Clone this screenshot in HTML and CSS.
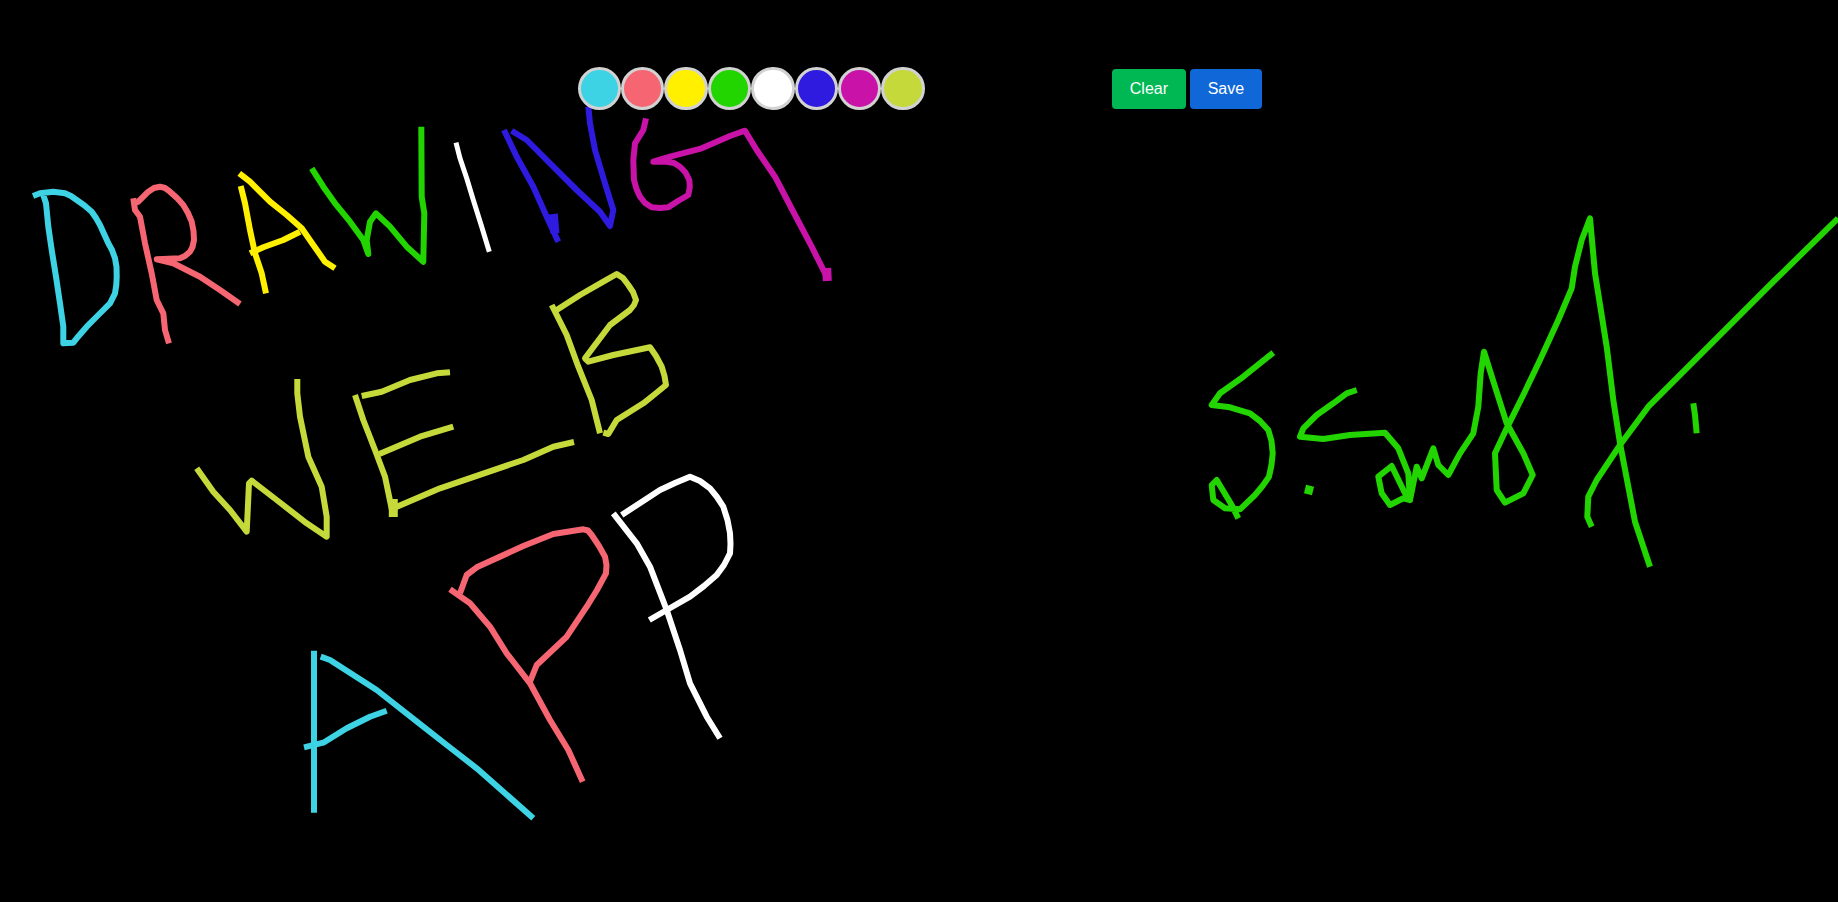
FILE: index.html
```html
<!DOCTYPE html>
<html>
<head>
  <meta charset="utf-8">
  <title>Drawing Web App</title>
  <link rel="stylesheet" href="styles.css">
</head>
<body>
  <svg class="board" width="1838" height="902" viewBox="0 0 1838 902">
    <!-- DRAWING -->
    <path class="ink cyan" d="M33 196L40 193.3L53.3 191.7L65 193.3L71 196L76.7 200L84.5 205.5L91.7 211.7L96 218L100 225L108.3 243.3L112 250L115 258.3L116.5 267L116.7 276.7L116.3 285L115 293.3L110 303.3L98.3 315L86.7 326.7L76.7 338.3L73.3 342.7L63.3 343.3L63.3 326.7L60 303.3L56 276.7L51.7 250L48.3 226.7L46 203.3L43.3 195"/>
    <path class="ink coral" d="M133.3 198.3L135 210L140 216.7L145 243.3L151.7 273.3L156.7 300L163.3 313.3L165 330L169 343.3"/>
    <path class="ink coral" d="M135 203L138.3 201.7L148.3 191.7L154 188L160 186.7L165 188L170 191.7L177 198L183.3 205L188 213L191.7 221.7L193.5 231L194 240L192.5 247L190 251.7L185 256L180 258.3L156.7 259.3L173.3 263.3L200 276.7L220 290L240 304"/>
    <path class="ink yellow" d="M240.7 186L245 203.3L250 230L255 253.3L261.7 273.3L266 293.3"/>
    <path class="ink yellow" d="M239.3 173.3L250 181.7L270 201.7L286.7 215L301.7 228.3L313.3 245L325 261.7L335 268.3"/>
    <path class="ink yellow" d="M250 253.3L263.3 247.3L283.3 240L300 231.7"/>
    <path class="ink green" d="M311.7 168.3L323.3 186.7L335 203.3L350 221.7L363.3 240L368.3 254L366.7 240L370 221.7L376 213.3L390 226.7L406.7 246.7L423.3 261.7L424.3 213.3L421.7 196.7L421.3 126.7"/>
    <path class="ink white thin" d="M456 142.7L460 158.3L466.7 178.3L473.3 200L481.7 226.7L489.3 251.7"/>
    <path class="ink blue" d="M504 130L516.7 156.7L533.3 186.7L546.7 216.7L558.3 241.7"/>
    <path class="ink blue blob" d="M553.3 214L555 233.3"/>
    <path class="ink blue" d="M511.7 130.7L526.7 140L553.3 166.7L576.7 190L600 211.7L610 226L613.3 210L605 183.3L595 150L590 123.3L588.3 106.7"/>
    <path class="ink magenta" d="M646 118.3L643.3 130L635 143.3L633.3 160L634 180L636.5 189L640 196.7L645 203L651.7 207.3L660 208L668.3 207.3L678 201L688.3 195L689.8 187L689.3 180L685.5 172.5L680 166.7L674 163L666.7 161.7L653.3 161.7L670 156.7L701.7 148.3L730 136L745 130.7L756.7 150L775 176.7L795 215L811.7 246.7L826.7 276.7"/>
    <path class="ink magenta blob" d="M826.7 268L827.3 281"/>
    <!-- WEB -->
    <path class="ink olive" d="M196.7 468.3L213.3 491.7L230 510L246.7 531.7L249 483.3L251.7 480.7L276.7 500L306.7 523.3L326.7 536.7L326.7 516.7L321.7 486.7L308.3 456.7L300 416.7L297.3 393.3L297.3 379"/>
    <path class="ink olive" d="M355 395L363.3 420L375 450L385 476.7L393.3 516.7"/>
    <path class="ink olive blob" d="M393.3 499L393.3 517"/>
    <path class="ink olive" d="M361.7 396L381.7 391.7L410 380L436.7 373.3L450 372.3"/>
    <path class="ink olive" d="M379.3 454L420 436.7L453.3 426.7"/>
    <path class="ink olive" d="M393.3 508.3L440 488.3L523.3 460L553.3 446.7L574 442"/>
    <path class="ink olive" d="M551.7 305L566.7 335L578.3 366.7L591.7 400L600 433.3"/>
    <path class="ink olive" d="M556.7 310L580 295L603.3 281.7L616.7 274L623 278L628.3 285L633 292L636 300L634 305L630 310L610 325L585 358.3L588.3 361.7L613.3 355L650 347.3L656 356L661.7 366.7L664.5 376L666 385L655 394L643.3 403.3L616.7 420L608.3 434L603.3 432.7"/>
    <!-- APP -->
    <path class="ink coral" d="M450 589.3L470 603.3L490 626.7L506.7 653.3L530 683.3L550 720L568.3 750L582.7 781.7"/>
    <path class="ink coral" d="M460 593.3L466.7 575L476.7 567.3L523.3 546L553.3 534L583.3 529.3L588 530.5L591.7 535L599 546L605 556.7L606.5 565L606 573.3L597 590L586.7 606.7L566.7 636.7L536.7 665L529.3 683.3"/>
    <path class="ink white" d="M613.3 513.3L636.7 543.3L650 566.7L666.7 610L680 650L690 683.3L706.7 716.7L720 738.3"/>
    <path class="ink white" d="M621.7 515L660 490L675 483L690 476.7L700 481L710 488.3L717 497L723.3 506.7L727.5 520L730 533.3L730.5 544L730 553.3L724 565L716.7 575L704 586L690 596.7L666.7 610L649.3 620"/>
    <path class="ink cyan" d="M314 650.7L314 812.7"/>
    <path class="ink cyan" d="M320.7 656.7L330 660L376.7 690L423.3 726.7L446.7 745L476.7 768.3L503.3 791.7L533.3 818.3"/>
    <path class="ink cyan" d="M304 747.3L323.3 742.7L346.7 728.3L370 716.7L386.7 710.7"/>
    <!-- signature -->
    <path class="ink green" d="M1273.3 352.7L1243.3 376.7L1220 393.3L1211.7 405L1230 407.3L1250 413.3L1260 421L1268.3 430L1271.5 441L1272.7 453.3L1271.5 465L1269 476.7L1262.5 486L1255 495L1240 509.3L1225 508.3L1213.3 500L1211.7 485L1216.7 480L1231.7 505L1238.3 518.3"/>
    <path class="ink green blob" d="M1305 489L1313 491"/>
    <path class="ink green" d="M1356.7 390L1346.7 393.3L1333.3 403.3L1316.7 415L1303.3 428.3L1300 436.7L1323.3 439L1350 435L1385 432.7L1398.3 448.3L1408.3 473.3L1410 500L1403.3 498.3L1390 505L1381.7 493.3L1378.3 476.7L1391.7 466L1405 493.3L1410 500L1416.7 466.7L1421.7 478.3L1433.3 448.3L1438.3 465L1448.3 475L1460 453.3L1473.3 433.3L1478.3 406.7L1480.7 373.3L1484 351.7L1495 386.7L1506.7 423.3L1523.3 453.3L1532.7 475L1523.3 493.3L1505 502.7L1496.7 490L1495 453.3L1506.7 428.3L1523.3 395L1540 360L1558.3 320L1571.7 288.3L1575 266.7L1581.7 240L1590 218.3L1595 273.3L1606.7 346.7L1613.3 400L1620 443.3L1635 521.7L1650 566.7"/>
    <path class="ink green" d="M1591.7 526.7L1587.3 516.7L1588.3 496.7L1596.7 480L1620 445L1648.3 406.7L1773.3 281.7L1838 218.3"/>
    <path class="ink green" d="M1693.3 403.3L1695 415L1696.7 433.3"/>
  </svg>

  <div class="toolbar">
    <div class="palette">
      <button class="swatch fill-cyan"></button>
      <button class="swatch fill-coral"></button>
      <button class="swatch fill-yellow"></button>
      <button class="swatch fill-green"></button>
      <button class="swatch fill-white"></button>
      <button class="swatch fill-blue"></button>
      <button class="swatch fill-magenta"></button>
      <button class="swatch fill-olive"></button>
    </div>
    <div class="actions">
      <button class="action clear">Clear</button>
      <button class="action save">Save</button>
    </div>
  </div>
</body>
</html>
```

FILE: styles.css
```css
html,
body {
  height: 100%;
}

body {
  margin: 0;
  background-color: #000;
  font-family: "Liberation Sans", Arial, sans-serif;
  overflow: hidden;
}

.board {
  position: absolute;
  top: 0;
  left: 0;
}

.ink {
  fill: none;
  stroke-width: 6;
  stroke-linecap: butt;
  stroke-linejoin: round;
}

.thin {
  stroke-width: 5;
}

.blob {
  stroke-width: 9;
}

.cyan { stroke: #3dd3e4; }
.coral { stroke: #f56672; }
.yellow { stroke: #fff000; }
.green { stroke: #22d500; }
.white { stroke: #fff; }
.blue { stroke: #2f1be0; }
.magenta { stroke: #c912a8; }
.olive { stroke: #c5d93b; }

.toolbar {
  position: relative;
  display: flex;
  justify-content: space-between;
  align-items: center;
  width: 684px;
  margin-left: 577.6px;
  padding-top: 67px;
}

.palette {
  display: flex;
}

.swatch {
  width: 43.4px;
  height: 43.4px;
  padding: 0;
  border: 3px solid #d2d2d2;
  border-radius: 50%;
  box-sizing: border-box;
}

.fill-cyan { background-color: #3dd3e4; }
.fill-coral { background-color: #f56672; }
.fill-yellow { background-color: #fff000; }
.fill-green { background-color: #22d500; }
.fill-white { background-color: #fff; }
.fill-blue { background-color: #2f1be0; }
.fill-magenta { background-color: #c912a8; }
.fill-olive { background-color: #c5d93b; }

.actions {
  display: flex;
  gap: 4.6px;
}

.action {
  height: 40px;
  padding: 0 17.5px;
  border: none;
  border-radius: 4px;
  color: #fff;
  font-family: inherit;
  font-size: 16px;
}

.clear {
  background-color: #00b853;
}

.save {
  background-color: #0f67d8;
}
```
